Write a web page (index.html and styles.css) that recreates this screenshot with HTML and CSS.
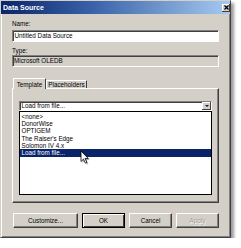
FILE: index.html
```html
<!DOCTYPE html>
<html>
<head>
<meta charset="utf-8">
<link rel="stylesheet" href="styles.css">
</head>
<body>
<div class="dialog">
  <div class="titlebar">
    <span class="title">Data Source</span>
    <span class="close"><svg width="5" height="5" viewBox="0 0 5 5"><path d="M0.5 0.5 L4.5 4.5 M4.5 0.5 L0.5 4.5" stroke="#000" stroke-width="1.2"/></svg></span>
  </div>
  <div class="content">
    <div class="label name-label">Name:</div>
    <div class="field input">Untitled Data Source</div>
    <div class="label type-label">Type:</div>
    <div class="field readonly">Microsoft OLEDB</div>
    <div class="tabs">
      <div class="tab active">Template</div>
      <div class="tab">Placeholders</div>
    </div>
    <div class="panel">
      <div class="combo">
        <span class="combo-text">Load from file...</span>
        <span class="combo-btn"><i class="arrow"></i></span>
      </div>
      <ul class="list">
        <li>&lt;none&gt;</li>
        <li>DonorWise</li>
        <li>OPTIGEM</li>
        <li>The Raiser's Edge</li>
        <li>Solomon IV 4.x</li>
        <li class="selected">Load from file...</li>
      </ul>
    </div>
    <div class="buttons">
      <button class="btn wide">Customize...</button>
      <button class="btn default">OK</button>
      <button class="btn">Cancel</button>
      <button class="btn disabled">Apply</button>
    </div>
  </div>
  <svg class="cursor" width="10" height="15" viewBox="0 0 10 15">
    <path d="M1.5 1.5 L1.5 12 L4 9.6 L5.8 13.6 L7.4 12.9 L5.6 9 L8.8 9 Z" fill="rgba(0,0,0,0.3)" transform="translate(1,1)"/>
    <path d="M1 1 L1 11.5 L3.5 9.1 L5.3 13.1 L6.9 12.4 L5.1 8.5 L8.3 8.5 Z" fill="#fff" stroke="#000" stroke-width="0.8" stroke-linejoin="round"/>
  </svg>
</div>
</body>
</html>
```

FILE: styles.css
```css
html, body {
  margin: 0;
  background: #fff;
}

body {
  font-family: "Liberation Sans", Arial, sans-serif;
  color: #000;
}

.dialog {
  position: relative;
  width: 231px;
  height: 238px;
  box-sizing: border-box;
  background: #d4d0c8;
  border: 1px solid;
  border-color: #d4d0c8 #404040 #404040 #d4d0c8;
  box-shadow: inset 1px 1px #fff, inset -1px -1px #808080, 3px 3px 3px rgba(0, 0, 0, 0.4);
  display: flex;
  flex-direction: column;
}

.titlebar {
  height: 13px;
  background: linear-gradient(to right, #0a246a 0%, #3a62a8 40%, #a6caf0 100%);
  display: flex;
  align-items: center;
  justify-content: space-between;
  padding: 0 0 0 2px;
}

.title {
  color: #fff;
  font-weight: bold;
  font-size: 7px;
  line-height: 13px;
}

.close {
  width: 8px;
  height: 8px;
  box-sizing: border-box;
  background: #d4d0c8;
  box-shadow: inset -1px -1px #404040, inset 1px 1px #fff;
  display: flex;
  align-items: center;
  justify-content: center;
}

.close svg {
  display: block;
}

.content {
  padding: 0 11px;
  display: flex;
  flex-direction: column;
}

.label {
  font-size: 6.3px;
  line-height: 8px;
}

.name-label {
  margin-top: 6px;
  margin-bottom: 2px;
}

.type-label {
  margin-top: 5px;
}

.field {
  height: 12px;
  box-sizing: border-box;
  border: 1px solid;
  border-color: #808080 #fff #fff #808080;
  box-shadow: inset 1px 1px #404040;
  font-size: 6.3px;
  line-height: 10px;
  padding-left: 1.5px;
  white-space: nowrap;
}

.input {
  background: #fff;
}

.readonly {
  background: #d4d0c8;
  padding-left: 1px;
}

.tabs {
  margin-top: 11px;
  height: 10px;
  display: flex;
  align-items: flex-end;
  padding-left: 1px;
}

.tab {
  font-size: 6.3px;
  box-sizing: border-box;
  height: 8px;
  line-height: 8px;
  width: 41px;
  text-align: center;
  border: 1px solid;
  border-color: #fff #404040 transparent #fff;
  border-bottom: none;
  border-radius: 1px 1px 0 0;
  white-space: nowrap;
}

.tab.active {
  width: 33px;
  height: 11px;
  line-height: 11px;
  margin-bottom: -1px;
  background: #d4d0c8;
  position: relative;
  z-index: 1;
}

.panel {
  height: 115px;
  box-sizing: border-box;
  border: 1px solid;
  border-color: #fff #404040 #404040 #fff;
  box-shadow: inset -1px -1px #808080;
  padding: 12px 6px 0 6px;
  display: flex;
  flex-direction: column;
}

.combo {
  height: 10px;
  box-sizing: border-box;
  background: #fff;
  border: 1px solid;
  border-color: #808080 #fff #fff #808080;
  box-shadow: inset 1px 1px #404040;
  display: flex;
  align-items: center;
  justify-content: space-between;
  font-size: 6.3px;
  line-height: 8px;
}

.combo-text {
  padding-left: 1.5px;
}

.combo-btn {
  width: 9px;
  height: 8px;
  box-sizing: border-box;
  background: #d4d0c8;
  box-shadow: inset -1px -1px #404040, inset 1px 1px #fff;
  display: flex;
  align-items: center;
  justify-content: center;
}

.arrow {
  display: block;
  width: 0;
  height: 0;
  border-left: 2px solid transparent;
  border-right: 2px solid transparent;
  border-top: 2px solid #0a1440;
}

.list {
  margin: 0;
  padding: 0.5px 0 0;
  list-style: none;
  height: 84px;
  box-sizing: border-box;
  border: 1px solid #000;
  background: #fff;
}

.list li {
  height: 7.4px;
  line-height: 7.4px;
  font-size: 6.3px;
  padding-left: 1.5px;
  white-space: nowrap;
}

.list li.selected {
  background: #0a246a;
  color: #fff;
}

.buttons {
  margin-top: 10px;
  display: flex;
  gap: 4px;
  padding-left: 1px;
}

.btn {
  width: 43px;
  height: 15px;
  box-sizing: border-box;
  font-family: "Liberation Sans", Arial, sans-serif;
  font-size: 6.3px;
  background: #d4d0c8;
  color: #000;
  border: 1px solid;
  border-color: #fff #404040 #404040 #fff;
  box-shadow: inset -1px -1px #808080;
  padding: 0;
  margin: 0;
}

.btn.wide {
  width: 65px;
}

.btn.default {
  border-color: #000;
  box-shadow: inset 1px 1px #fff, inset -1px -1px #404040;
}

.btn.disabled {
  color: #a09c94;
  text-shadow: 0.5px 0.5px #fff;
}

.cursor {
  position: absolute;
  left: 79px;
  top: 149px;
}
```
